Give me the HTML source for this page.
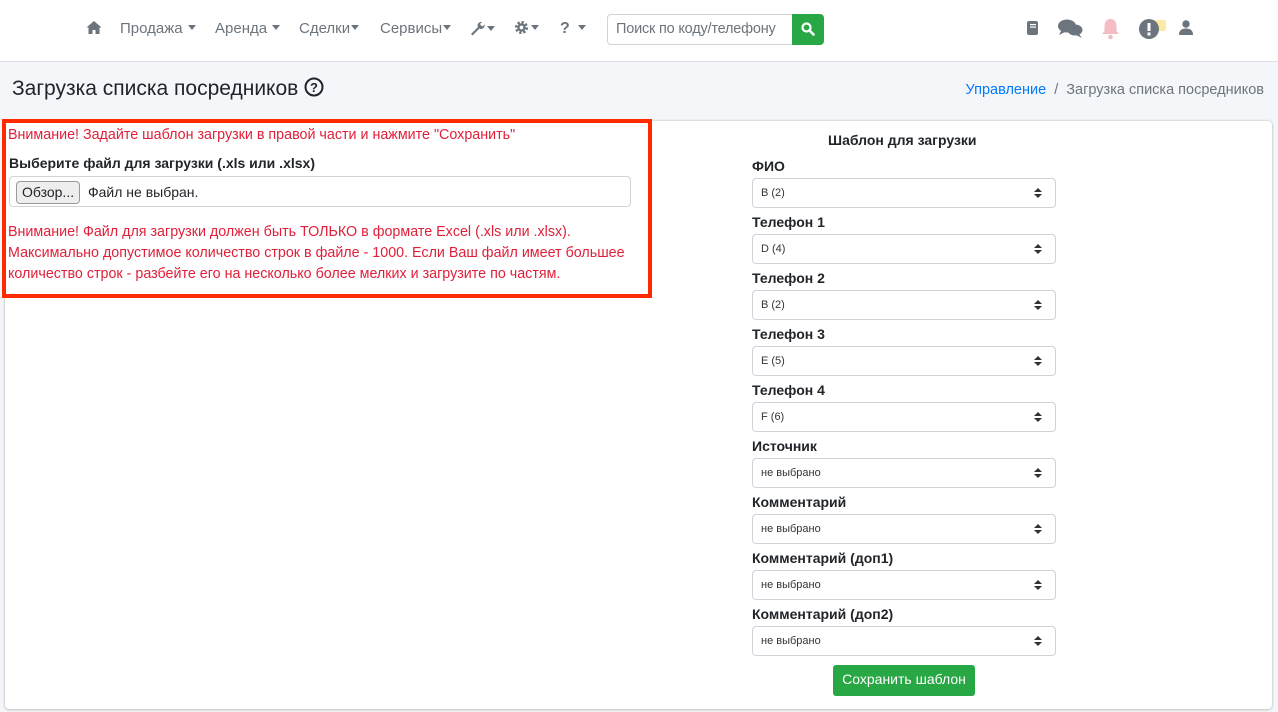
<!DOCTYPE html>
<html><head><meta charset="utf-8"><style>
*{box-sizing:border-box}
body{margin:0;width:1278px;height:712px;overflow:hidden;background:#f4f6f9;font-family:"Liberation Sans",Arial,sans-serif;color:#212529;position:relative}
.nav{position:absolute;left:0;top:0;width:1278px;height:62px;background:#fff;border-bottom:1px solid #dee2e6}
.ni{position:absolute;top:20px;font-size:15px;color:#6c757d;white-space:nowrap}
.car{display:inline-block;width:0;height:0;border-left:4px solid transparent;border-right:4px solid transparent;border-top:5px solid #6c757d;vertical-align:3px;margin-left:5px}
.search{position:absolute;left:607px;top:14px;width:186px;height:31px;border:1px solid #ced4da;border-radius:4px 0 0 4px;font-size:14.5px;color:#6c757d;padding:6px 8px;white-space:nowrap;overflow:hidden;letter-spacing:-0.2px}
.sbtn{position:absolute;left:792px;top:14px;width:32px;height:31px;background:#28a745;border-radius:0 4px 4px 0}
h1{position:absolute;left:12px;top:77px;margin:0;font-size:21px;font-weight:400;color:#212529;white-space:nowrap}
.bc{position:absolute;right:14px;top:82px;font-size:14.5px;color:#6c757d}
.bc a{color:#007bff;text-decoration:none}
.card{position:absolute;left:5px;top:121px;width:1267px;height:588px;background:#fff;border-radius:4px;box-shadow:0 0 2px rgba(0,0,0,.2),0 1px 3px rgba(0,0,0,.15)}
.red{position:absolute;left:2px;top:119px;width:650px;height:179px;border:4px solid #ff2a00;}
.rt{position:absolute;color:#e0203a;font-size:14.3px;white-space:nowrap}
.lab{position:absolute;font-weight:700;font-size:14px}
.file{position:absolute;left:9px;top:176px;width:622px;height:31px;border:1px solid #ced4da;border-radius:4px}
.fb{position:absolute;left:6px;top:4px;height:23px;padding:2px 5px;border:1px solid #999;border-radius:4px;background:#eee;font-size:14px}
.sel{position:absolute;left:752px;width:304px;height:30px;border:1px solid #ced4da;border-radius:4px;font-size:11px;padding:8px 8px;color:#333}
.sel:after{content:"";position:absolute;right:13px;top:9px;border-left:4px solid transparent;border-right:4px solid transparent;border-bottom:4px solid #333}
.sel:before{content:"";position:absolute;right:13px;top:15px;border-left:4px solid transparent;border-right:4px solid transparent;border-top:4px solid #333}
.save{position:absolute;left:833px;top:665px;width:142px;height:31px;background:#28a745;color:#fff;border-radius:3px;font-size:14px;text-align:center;line-height:29px}
</style></head><body>
<div class="nav">
<svg style="position:absolute;left:86px;top:20px" width="16" height="15" viewBox="0 0 16 15"><path d="M8 1L0.5 7.5h2V14h4v-4h3v4h4V7.5h2z" fill="#6c757d"/></svg>
<span class="ni" style="left:120px">Продажа<span class="car"></span></span>
<span class="ni" style="left:215px">Аренда<span class="car"></span></span>
<span class="ni" style="left:299px">Сделки<span class="car" style="margin-left:1px"></span></span>
<span class="ni" style="left:380px">Сервисы<span class="car" style="margin-left:1px"></span></span>
<span class="ni" style="left:469px"><svg width="16" height="16" viewBox="0 0 16 16" style="vertical-align:-2px"><path d="M2 14l7-7a3.5 3.5 0 0 1 4-5l-2 2 1 1.5 1.5 1 2-2a3.5 3.5 0 0 1-5 4l-7 7z" fill="#6c757d"/></svg><span class="car" style="margin-left:2px"></span></span>
<span class="ni" style="left:514px"><svg width="15" height="15" viewBox="0 0 16 16" style="vertical-align:-2px"><circle cx="8" cy="8" r="5" fill="none" stroke="#6c757d" stroke-width="4" stroke-dasharray="2.2 1.7"/><circle cx="8" cy="8" r="4.5" fill="#6c757d"/><circle cx="8" cy="8" r="2" fill="#fff"/></svg><span class="car" style="margin-left:2px"></span></span>
<span class="ni" style="left:560px;font-weight:700;font-size:16px">?<span class="car" style="margin-left:8px"></span></span>
<div class="search">Поиск по коду/телефону</div>
<div class="sbtn"><svg style="position:absolute;left:9px;top:8px" width="14" height="14" viewBox="0 0 14 14"><circle cx="5.5" cy="5.5" r="4" fill="none" stroke="#fff" stroke-width="2.2"/><path d="M8.5 8.5L12.5 12.5" stroke="#fff" stroke-width="2.6" stroke-linecap="round"/></svg></div>
<svg style="position:absolute;left:1027px;top:21px" width="12" height="15" viewBox="0 0 12 15"><rect x="0" y="0" width="11" height="14" rx="2" fill="#6c757d"/><rect x="3" y="3" width="6" height="1.2" fill="#fff"/><rect x="3" y="5.5" width="6" height="1.2" fill="#fff"/></svg>
<svg style="position:absolute;left:1058px;top:19px" width="25" height="19" viewBox="0 0 25 19"><ellipse cx="9" cy="7" rx="9" ry="6.5" fill="#6c757d"/><path d="M3 12l-2 4 6-3z" fill="#6c757d"/><ellipse cx="17" cy="11" rx="7.5" ry="5.5" fill="#6c757d"/><path d="M21 15l3 4-6-3z" fill="#6c757d"/></svg>
<svg style="position:absolute;left:1101px;top:18px" width="19" height="22" viewBox="0 0 19 22"><path d="M9.5 1c-4 0-6 3-6 7v5l-2.5 3h17l-2.5-3V8c0-4-2-7-6-7z" fill="#f5bcc4"/><circle cx="9.5" cy="19" r="2.3" fill="#f5bcc4"/></svg>
<svg style="position:absolute;left:1139px;top:18px" width="28" height="22" viewBox="0 0 28 22"><rect x="13" y="2" width="14" height="11" rx="2" fill="#fbe9a6"/><circle cx="10" cy="11" r="10" fill="#6c757d"/><rect x="8.5" y="5" width="3" height="8" fill="#fff"/><rect x="8.5" y="14.5" width="3" height="3" fill="#fff"/></svg>
<svg style="position:absolute;left:1179px;top:20px" width="14" height="15" viewBox="0 0 14 15"><circle cx="7" cy="4" r="3.7" fill="#6c757d"/><path d="M0 15c0-5 3-6.5 7-6.5s7 1.5 7 6.5z" fill="#6c757d"/></svg>
</div>
<h1>Загрузка списка посредников <svg width="20" height="20" viewBox="0 0 20 20" style="vertical-align:-2px"><circle cx="10" cy="10" r="8.5" fill="none" stroke="#212529" stroke-width="2"/><text x="10" y="15" font-size="13" font-weight="700" text-anchor="middle" fill="#212529" font-family="Liberation Sans">?</text></svg></h1>
<div class="bc"><a>Управление</a>&nbsp; / &nbsp;Загрузка списка посредников</div>
<div class="card"></div>
<div class="red"></div>
<div class="rt" style="left:8px;top:127px">Внимание! Задайте шаблон загрузки в правой части и нажмите "Сохранить"</div>
<div class="lab" style="left:9px;top:155px">Выберите файл для загрузки (.xls или .xlsx)</div>
<div class="file"><span class="fb">Обзор...</span><span style="position:absolute;left:78px;top:7px;font-size:14px">Файл не выбран.</span></div>
<div class="rt" style="left:8px;top:222px;line-height:21px">Внимание! Файл для загрузки должен быть ТОЛЬКО в формате Excel (.xls или .xlsx).<br>Максимально допустимое количество строк в файле - 1000. Если Ваш файл имеет большее<br>количество строк - разбейте его на несколько более мелких и загрузите по частям.</div>
<div class="lab" style="left:828px;top:132px">Шаблон для загрузки</div>
<div class="lab" style="left:752px;top:158px">ФИО</div><div class="sel" style="top:178px">B (2)</div>
<div class="lab" style="left:752px;top:214px">Телефон 1</div><div class="sel" style="top:234px">D (4)</div>
<div class="lab" style="left:752px;top:270px">Телефон 2</div><div class="sel" style="top:290px">B (2)</div>
<div class="lab" style="left:752px;top:326px">Телефон 3</div><div class="sel" style="top:346px">E (5)</div>
<div class="lab" style="left:752px;top:382px">Телефон 4</div><div class="sel" style="top:402px">F (6)</div>
<div class="lab" style="left:752px;top:438px">Источник</div><div class="sel" style="top:458px">не выбрано</div>
<div class="lab" style="left:752px;top:494px">Комментарий</div><div class="sel" style="top:514px">не выбрано</div>
<div class="lab" style="left:752px;top:550px">Комментарий (доп1)</div><div class="sel" style="top:570px">не выбрано</div>
<div class="lab" style="left:752px;top:606px">Комментарий (доп2)</div><div class="sel" style="top:626px">не выбрано</div>
<div class="save">Сохранить шаблон</div>
</body></html>
